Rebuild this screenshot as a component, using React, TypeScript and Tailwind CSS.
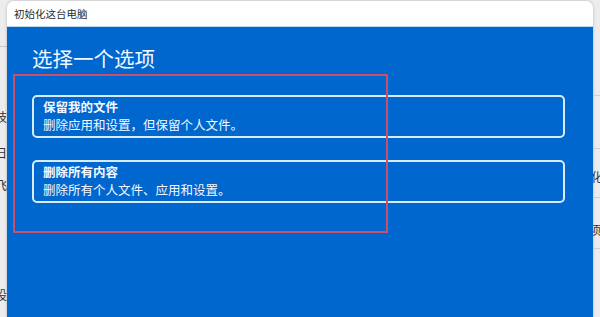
import React from "react";

const font = { fontFamily: '"Noto Sans CJK SC", "Noto Sans", sans-serif' };

const OptionCard = ({ title, desc }: { title: string; desc: string }) => (
  <div className="w-[533px] h-[43px] border-2 border-[#d6ecff] rounded-[5px] px-[9px] pt-[1px] flex flex-col text-[#f4f9ff]">
    <span className="text-[12.5px] leading-[18px] font-bold">{title}</span>
    <span className="text-[12.5px] leading-[18px]">{desc}</span>
  </div>
);

export default function App() {
  return (
    <div className="w-[600px] h-[317px] flex bg-[#ececec] overflow-hidden" style={font}>
      {/* page behind the dialog, left */}
      <div className="w-[7px] flex flex-col text-[12px] text-[#333] overflow-hidden">
        <div className="h-[46px] shrink-0" />
        <div className="h-px bg-[#c9c9c9] shrink-0" />
        <div className="h-[62px] shrink-0" />
        <div className="flex justify-end whitespace-nowrap leading-[16px]">技</div>
        <div className="h-[20px] shrink-0" />
        <div className="flex justify-end whitespace-nowrap leading-[16px]">日</div>
        <div className="h-[16px] shrink-0" />
        <div className="flex justify-end whitespace-nowrap leading-[16px]">飞</div>
        <div className="h-[94px] shrink-0" />
        <div className="flex justify-end whitespace-nowrap leading-[16px]">i设</div>
      </div>

      {/* dialog */}
      <div className="w-[586px] h-[319px] mt-[1px] flex flex-col rounded-t-[7px] overflow-hidden shadow-[0_0_3px_rgba(0,0,0,0.25)]">
        <div className="h-[26px] shrink-0 bg-white flex items-center pl-[7px] text-[10.5px] text-[#2b2b2b] border-b border-[#bcd9f3]">
          初始化这台电脑
        </div>
        <div className="relative flex-1 bg-[#0067cf] flex flex-col pl-[25px] pt-[18px]">
          <h1 className="text-[20.5px] leading-[26px] text-[#f2f8ff]">选择一个选项</h1>
          <div className="mt-[24px] flex flex-col gap-[22px]">
            <OptionCard title="保留我的文件" desc="删除应用和设置，但保留个人文件。" />
            <OptionCard title="删除所有内容" desc="删除所有个人文件、应用和设置。" />
          </div>
          {/* annotation box */}
          <div className="absolute left-[6px] top-[47px] w-[375px] h-[159px] border-2 border-[#c8506a]" />
        </div>
      </div>

      {/* page behind the dialog, right */}
      <div className="w-[7px] flex flex-col text-[12px] text-[#333] overflow-hidden">
        <div className="h-[95px] shrink-0" />
        <div className="h-px bg-[#cfcfcf] shrink-0" />
        <div className="h-[52px] shrink-0" />
        <div className="h-px bg-[#cfcfcf] shrink-0" />
        <div className="h-[20px] shrink-0" />
        <div className="whitespace-nowrap leading-[16px] -ml-[2px]">化</div>
        <div className="h-[12px] shrink-0" />
        <div className="h-px bg-[#cfcfcf] shrink-0" />
        <div className="h-[24px] shrink-0" />
        <div className="whitespace-nowrap leading-[16px] -ml-[4px]">项</div>
        <div className="h-[10px] shrink-0" />
        <div className="h-px bg-[#cfcfcf] shrink-0" />
      </div>
    </div>
  );
}
